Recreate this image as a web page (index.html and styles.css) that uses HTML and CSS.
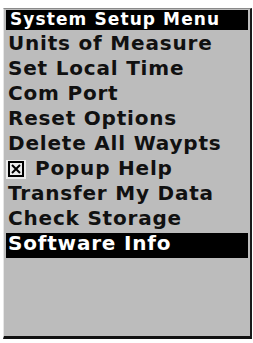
FILE: index.html
```html
<!DOCTYPE html>
<html lang="en">

<head>
    <meta charset="UTF-8">
    <title>System Setup Menu</title>
    <link rel="stylesheet" href="styles.css">
</head>

<body>
    <div class="screen">
        <div class="title">System Setup Menu</div>
        <ul class="menu">
            <li class="item">Units of Measure</li>
            <li class="item">Set Local Time</li>
            <li class="item">Com Port</li>
            <li class="item">Reset Options</li>
            <li class="item">Delete All Waypts</li>
            <li class="item check-item">
                <svg class="checkbox" width="20" height="19" viewBox="0 0 20 19">
                    <rect x="0" y="0" width="20" height="19" fill="#ededed" />
                    <rect x="3" y="2" width="14" height="14" fill="none" stroke="#000" stroke-width="2" />
                    <path d="M6 5 L14 13 M14 5 L6 13" stroke="#000" stroke-width="2" />
                </svg>
                <span>Popup Help</span>
            </li>
            <li class="item">Transfer My Data</li>
            <li class="item">Check Storage</li>
            <li class="item selected">Software Info</li>
        </ul>
    </div>
</body>

</html>
```

FILE: styles.css
```css
body {
    margin: 0;
    background-color: #fff;
    font-family: "DejaVu Sans", Verdana, sans-serif;
}

.screen {
    box-sizing: border-box;
    width: 249px;
    height: 331px;
    margin: 8px 0 0 3px;
    padding: 1px 2px 0 2px;
    background-color: #bcbcbc;
    border-left: 1px solid #e6e6e6;
    border-top: 1px solid #8a8a8a;
    border-right: 2px solid #1a1a1a;
    border-bottom: 3px solid #111;
}

.title {
    height: 20px;
    line-height: 19px;
    padding-left: 4px;
    background-color: #000;
    color: #fff;
    font-size: 17px;
    font-weight: bold;
    letter-spacing: 1.1px;
    white-space: nowrap;
}

.menu {
    list-style: none;
    margin: 3px 0 0 0;
    padding: 0;
}

.item {
    height: 25px;
    line-height: 21px;
    padding-left: 2px;
    color: #111;
    font-size: 20px;
    font-weight: bold;
    letter-spacing: 0.8px;
    white-space: nowrap;
}

.check-item {
    display: flex;
    align-items: flex-start;
    padding-left: 0;
}

.checkbox {
    display: block;
    margin-top: 2px;
    margin-right: 9px;
    flex-shrink: 0;
}

.selected {
    background-color: #000;
    color: #fff;
}
```
